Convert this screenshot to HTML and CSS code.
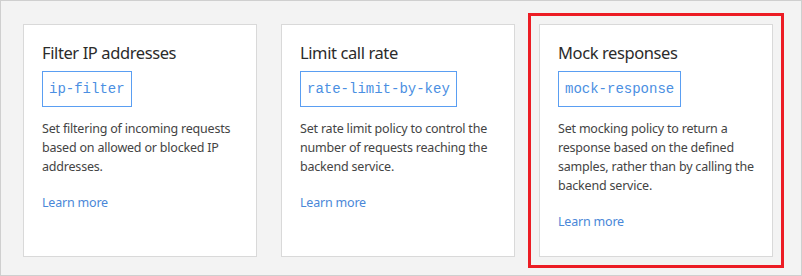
FILE: index.html
```html
<!DOCTYPE html>
<html>
<head>
    <title>Policy cards</title>
    <link rel="stylesheet" href="styles.css">
</head>
<body>
    <div class="frame">
        <div class="card">
            <h3>Filter IP addresses</h3>
            <code class="policy">ip-filter</code>
            <p>Set filtering of incoming requests based on allowed or blocked IP addresses.</p>
            <a href="#">Learn more</a>
        </div>
        <div class="card">
            <h3>Limit call rate</h3>
            <code class="policy">rate-limit-by-key</code>
            <p>Set rate limit policy to control the number of requests reaching the backend service.</p>
            <a href="#">Learn more</a>
        </div>
        <div class="card highlight">
            <h3>Mock responses</h3>
            <code class="policy">mock-response</code>
            <p>Set mocking policy to return a response based on the defined samples, rather than by calling the backend service.</p>
            <a href="#">Learn more</a>
        </div>
    </div>
</body>
</html>
```

FILE: styles.css
```css
body {
    margin: 0;
    font-family: "Noto Sans", "Open Sans", sans-serif;
}

.frame {
    width: 802px;
    height: 276px;
    box-sizing: border-box;
    border: 1px solid #cfcfcf;
    background-color: #f3f3f3;
    display: flex;
    gap: 24px;
    padding: 23px 0 0 22px;
}

.card {
    width: 234px;
    height: 233px;
    box-sizing: border-box;
    background: #fff;
    border: 1px solid #d9d9d9;
    padding: 16px 18px;
    display: flex;
    flex-direction: column;
    align-items: flex-start;
}

.highlight {
    outline: 3px solid #ec1c24;
    outline-offset: 8px;
}

h3 {
    margin: 0;
    font-size: 16.5px;
    font-weight: normal;
    letter-spacing: -0.4px;
    line-height: 24px;
    color: #2b2b2b;
}

.policy {
    margin-top: 6px;
    padding: 0 6px;
    height: 36px;
    line-height: 34px;
    box-sizing: border-box;
    border: 1.5px solid #5a9ef2;
    font-family: "Liberation Mono", monospace;
    font-size: 14px;
    color: #4b8fe2;
}

p {
    margin: 12px 0 0;
    font-size: 12.5px;
    letter-spacing: -0.2px;
    line-height: 19px;
    color: #444;
}

a {
    margin-top: 18px;
    font-size: 12.5px;
    letter-spacing: -0.2px;
    line-height: 18px;
    color: #4a87d8;
    text-decoration: none;
}
```
